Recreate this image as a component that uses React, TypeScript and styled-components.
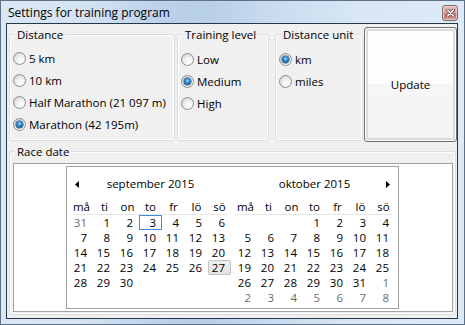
import React from "react";
import styled, { createGlobalStyle } from "styled-components";

const Global = createGlobalStyle`
  html, body { margin: 0; padding: 0; background: #ffffff; }
  body {
    font-family: "Open Sans", "Noto Sans", sans-serif;
    font-size: 11.5px;
    color: #000000;
  }
  * { box-sizing: border-box; }
`;

const Window = styled.div`
  width: 465px;
  height: 325px;
  border: 1px solid #5d7188;
  background: linear-gradient(
    to right,
    #dbe7f4 0%,
    #d4e3f2 18%,
    #bcd2ea 34%,
    #b8cfe8 44%,
    #cadcef 60%,
    #d9e7f5 78%,
    #dce9f6 100%
  );
  display: flex;
  flex-direction: column;
  padding: 0 6px 5px 5px;
`;

const TitleBar = styled.div`
  height: 22px;
  padding: 2px 0 0 2px;
  display: flex;
  align-items: center;
`;

const TitleText = styled.span`
  font-size: 12px;
  line-height: 16px;
  color: #000;
`;

const CloseButton = styled.div`
  width: 16px;
  height: 16px;
  margin-left: auto;
  border: 1px solid #7d6a6a;
  border-radius: 3px;
  background: linear-gradient(#e9bcb7 0%, #d9a39c 45%, #c8786f 55%, #d5988f 100%);
  box-shadow: inset 0 0 0 1px rgba(255, 255, 255, 0.45);
  display: flex;
  align-items: center;
  justify-content: center;
`;

const Client = styled.div`
  flex: 1;
  border: 1px solid #24364a;
  background: #f0f0f0;
  display: flex;
  flex-direction: column;
`;

const TopRow = styled.div`
  display: flex;
  align-items: flex-start;
  padding-left: 2px;
`;

const Group = styled.div<{ $w: number; $ml?: number; $h: number; $mt: number }>`
  width: ${(p) => p.$w}px;
  height: ${(p) => p.$h}px;
  margin-left: ${(p) => p.$ml ?? 0}px;
  margin-top: ${(p) => p.$mt}px;
  border: 1px solid #d5dfe5;
  border-radius: 3px;
  box-shadow: inset 0 0 0 1px #ffffff;
  display: flex;
  flex-direction: column;
`;

const GroupLabel = styled.div`
  width: fit-content;
  height: 15px;
  margin: -8px 0 0 5px;
  padding: 0 2px;
  line-height: 15px;
  background: #f0f0f0;
`;

const RadioList = styled.div<{ $pt: number; $pl: number }>`
  display: flex;
  flex-direction: column;
  padding-top: ${(p) => p.$pt}px;
  padding-left: ${(p) => p.$pl}px;
`;

const RadioRow = styled.label`
  height: 22px;
  display: flex;
  align-items: center;
  gap: 3px;
  line-height: 15px;
`;

const RadioDot = styled.span<{ $on?: boolean }>`
  width: 13px;
  height: 13px;
  flex: none;
  border-radius: 50%;
  border: 1px solid #8e8f8f;
  background: radial-gradient(circle at 65% 70%, #ffffff 0%, #f4f4f4 35%, #d6d6d6 80%, #c9c9c9 100%);
  display: flex;
  align-items: center;
  justify-content: center;

  &::after {
    content: "";
    display: ${(p) => (p.$on ? "block" : "none")};
    width: 7px;
    height: 7px;
    border-radius: 50%;
    background: radial-gradient(circle at 50% 40%, #9fdcff 0%, #3a92d8 35%, #12508f 75%, #0b335e 100%);
    box-shadow: 0 0 0 0.5px #1b3f66;
  }
`;

const UpdateButton = styled.button`
  width: 93px;
  height: 115px;
  margin: 3px 0 0 1px;
  border: 1px solid #707070;
  border-radius: 3px;
  background: linear-gradient(#ffffff 0%, #fdfdfd 50%, #f6f6f6 50%, #f3f3f3 100%);
  box-shadow: inset 0 0 0 1px #fbfbfb, inset 0 0 0 3px #dcdcdc;
  font-family: inherit;
  font-size: 11.5px;
  color: #000;
  padding: 0;
`;

const RaceGroup = styled(Group)`
  margin-left: 2px;
`;

const Panel = styled.div`
  width: 440px;
  height: 149px;
  margin: 4px 0 0 3px;
  border: 1px solid #a3a3a3;
  background: #ffffff;
  padding: 2px 0 0 52px;
`;

const Calendar = styled.div`
  width: 333px;
  height: 143px;
  border: 1px solid #a0a0a0;
  background: #ffffff;
  padding: 0 3px 3px 3px;
  display: flex;
  gap: 3px;
`;

const Month = styled.div`
  width: 161px;
  display: flex;
  flex-direction: column;
`;

const MonthTitle = styled.div`
  height: 33px;
  padding-top: 9px;
  display: grid;
  grid-template-columns: 20px 1fr 20px;
  grid-template-rows: 16px;
  align-items: center;
  line-height: 16px;
`;

const MonthName = styled.span`
  grid-column: 2;
  text-align: center;
`;

const Arrow = styled.svg<{ $side: "left" | "right" }>`
  grid-column: ${(p) => (p.$side === "left" ? 1 : 3)};
  grid-row: 1;
  justify-self: ${(p) => (p.$side === "left" ? "start" : "end")};
  margin: ${(p) => (p.$side === "left" ? "0 0 0 5px" : "0 5px 0 0")};
`;

const HeaderRow = styled.div`
  height: 14px;
  display: grid;
  grid-template-columns: repeat(7, 23px);
  line-height: 14px;
`;

const HeaderCell = styled.span`
  text-align: center;
`;

const Separator = styled.div`
  height: 1px;
  margin: 0 3px;
  background: #e6e6e6;
`;

const DaysGrid = styled.div`
  display: grid;
  grid-template-columns: repeat(7, 23px);
  grid-auto-rows: 15px;
`;

const Day = styled.span<{ $muted?: boolean; $today?: boolean; $selected?: boolean }>`
  border: 1px solid
    ${(p) => (p.$today ? "#3d8ee0" : p.$selected ? "#c4c4c4" : "transparent")};
  border-radius: ${(p) => (p.$selected ? "2px" : "0")};
  background: ${(p) =>
    p.$selected ? "linear-gradient(#f0f0f0, #e3e3e3)" : "transparent"};
  padding-right: 5px;
  text-align: right;
  line-height: 13px;
  color: ${(p) => (p.$muted ? "#6d6d6d" : "#000000")};
`;

type DayData = { n?: number; muted?: boolean; today?: boolean; selected?: boolean };

const weekdays = ["må", "ti", "on", "to", "fr", "lö", "sö"];

function range(a: number, b: number, extra: Partial<DayData> = {}): DayData[] {
  const out: DayData[] = [];
  for (let i = a; i <= b; i++) out.push({ n: i, ...extra });
  return out;
}

const september: DayData[] = [
  { n: 31, muted: true },
  ...range(1, 30).map((d) =>
    d.n === 3 ? { ...d, today: true } : d.n === 27 ? { ...d, selected: true } : d
  ),
];

const october: DayData[] = [
  {},
  {},
  {},
  ...range(1, 31),
  ...range(1, 8, { muted: true }),
];

function MonthView({ name, days, arrow }: { name: string; days: DayData[]; arrow: "left" | "right" }) {
  return (
    <Month>
      <MonthTitle>
        <Arrow $side={arrow} width="4" height="7" viewBox="0 0 4 7">
          {arrow === "left" ? (
            <polygon points="4,0 4,7 0,3.5" fill="#000" />
          ) : (
            <polygon points="0,0 0,7 4,3.5" fill="#000" />
          )}
        </Arrow>
        <MonthName>{name}</MonthName>
      </MonthTitle>
      <HeaderRow>
        {weekdays.map((w) => (
          <HeaderCell key={w}>{w}</HeaderCell>
        ))}
      </HeaderRow>
      <Separator />
      <DaysGrid>
        {days.map((d, i) => (
          <Day key={i} $muted={d.muted} $today={d.today} $selected={d.selected}>
            {d.n ?? ""}
          </Day>
        ))}
      </DaysGrid>
    </Month>
  );
}

function Radio({ label, on }: { label: string; on?: boolean }) {
  return (
    <RadioRow>
      <RadioDot $on={on} />
      <span>{label}</span>
    </RadioRow>
  );
}

export default function App() {
  return (
    <>
      <Global />
      <Window>
        <TitleBar>
          <TitleText>Settings for training program</TitleText>
          <CloseButton>
            <svg width="9" height="8" viewBox="0 0 9 8">
              <path d="M1.5 1 L7.5 7 M7.5 1 L1.5 7" stroke="#5b4646" strokeWidth="3" strokeLinecap="round" />
              <path d="M1.5 1 L7.5 7 M7.5 1 L1.5 7" stroke="#ffffff" strokeWidth="1.5" strokeLinecap="round" />
            </svg>
          </CloseButton>
        </TitleBar>
        <Client>
          <TopRow>
            <Group $w={166} $h={107} $mt={10}>
              <GroupLabel>Distance</GroupLabel>
              <RadioList $pt={5} $pl={3}>
                <Radio label="5 km" />
                <Radio label="10 km" />
                <Radio label="Half Marathon (21 097 m)" />
                <Radio label="Marathon (42 195m)" on />
              </RadioList>
            </Group>
            <Group $w={92} $ml={2} $h={107} $mt={10}>
              <GroupLabel>Training level</GroupLabel>
              <RadioList $pt={6} $pl={3}>
                <Radio label="Low" />
                <Radio label="Medium" on />
                <Radio label="High" />
              </RadioList>
            </Group>
            <Group $w={88} $ml={6} $h={107} $mt={10}>
              <GroupLabel>Distance unit</GroupLabel>
              <RadioList $pt={6} $pl={3}>
                <Radio label="km" on />
                <Radio label="miles" />
              </RadioList>
            </Group>
            <UpdateButton>Update</UpdateButton>
          </TopRow>
          <RaceGroup $w={447} $h={164} $mt={9}>
            <GroupLabel>Race date</GroupLabel>
            <Panel>
              <Calendar>
                <MonthView name="september 2015" days={september} arrow="left" />
                <MonthView name="oktober 2015" days={october} arrow="right" />
              </Calendar>
            </Panel>
          </RaceGroup>
        </Client>
      </Window>
    </>
  );
}
